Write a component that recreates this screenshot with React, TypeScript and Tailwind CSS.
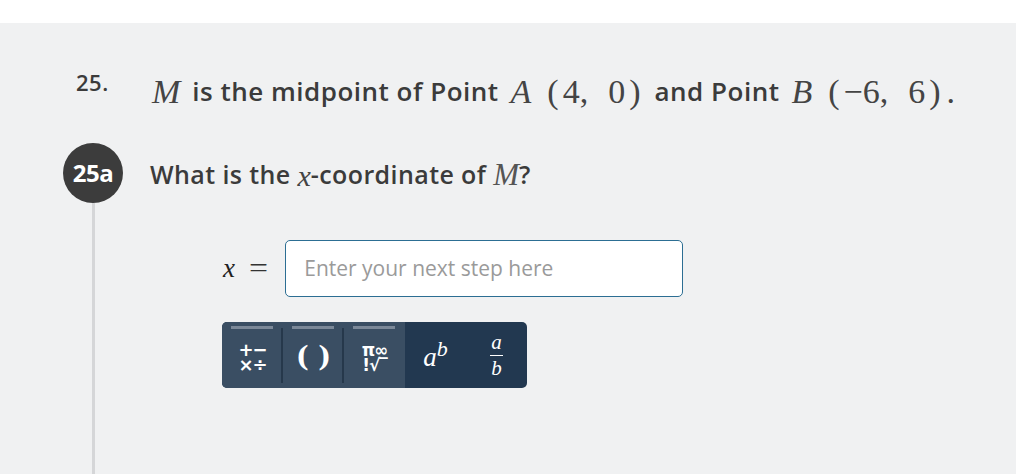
import React from 'react';

const serif = "font-['Liberation_Serif','DejaVu_Serif',serif]";
const sans = "font-['Open_Sans','Lato',sans-serif]";

const M: React.FC<{ children: React.ReactNode; className?: string }> = ({ children, className }) => (
    <span className={`${serif} font-normal tracking-normal ${className ?? ''}`}>{children}</span>
);

// a coordinate pair typeset like KaTeX: wide parens, spaced comma
const Coord: React.FC<{ x: string; y: string; dot?: boolean }> = ({ x, y, dot }) => (
    <span className={`${serif} font-normal tracking-normal text-[34px] text-[#444] inline-flex items-center`}>
        <span className="mr-[4px]">(</span>
        <span>{x},</span>
        <span className="ml-[20px]">{y}</span>
        <span className="ml-[4px]">)</span>
        {dot && <span className="ml-[6px]">.</span>}
    </span>
);

const KeyBar: React.FC = () => (
    <div className="absolute top-[4px] left-[9px] h-[3px] w-[42px] bg-[#7b8898]" />
);

const App: React.FC = () => {
    return (
        <div className={`w-full h-[474px] bg-white flex flex-col overflow-hidden ${sans}`}>
            <div className="h-[23px] bg-white" />
            <div className="flex-1 bg-[#f0f1f2] flex flex-col pt-[48px]">
                {/* problem statement */}
                <div className="flex items-start pl-[76px]">
                    <span className="w-[76px] text-[22px] leading-[22px] font-semibold text-[#3b3b3b] tracking-[0.5px]">25.</span>
                    <div className="h-[40px] flex items-center text-[26px] font-semibold text-[#3b3b3b] whitespace-nowrap tracking-[0.5px]">
                        <M className="italic text-[34px] text-[#444] mr-[12px]">M</M>
                        is the midpoint of Point
                        <M className="italic text-[34px] text-[#444] ml-[12px] mr-[16px]">A</M>
                        <Coord x="4" y="0" />
                        <span className="ml-[14px]">and Point</span>
                        <M className="italic text-[34px] text-[#444] ml-[12px] mr-[16px]">B</M>
                        <Coord x="−6" y="6" dot />
                    </div>
                </div>

                {/* part a */}
                <div className="flex flex-1 mt-[32px]">
                    <div className="w-[60px] ml-[63px] flex flex-col items-center">
                        <div className="w-[60px] h-[60px] rounded-full bg-[#3c3c3c] flex items-center justify-center text-white text-[24px] font-bold tracking-[-0.5px]">
                            25a
                        </div>
                        <div className="w-[3px] flex-1 bg-[#d5d6d8]" />
                    </div>
                    <div className="ml-[27px] flex flex-col">
                        <div className="h-[60px] flex items-center pt-[4px] text-[25px] font-semibold text-[#3b3b3b] whitespace-nowrap tracking-[0.4px]">
                            What is the&nbsp;<M className="italic text-[30px] text-[#444]">x</M>-coordinate of&nbsp;<M className="italic text-[31px] text-[#555]">M</M>?
                        </div>

                        <div className="flex items-center mt-[37px] ml-[73px]">
                            <M className="italic text-[27px] text-[#222]">x</M>
                            <M className="text-[27px] text-[#333] ml-[16px] scale-x-125">=</M>
                            <div className="ml-[19px] w-[398px] h-[57px] bg-white border border-[#2c6e93] rounded-[5px] flex items-center pl-[18px] text-[21px] text-[#9a9a9a]">
                                Enter your next step here
                            </div>
                        </div>

                        <div className="mt-[25px] ml-[72px] w-[305px] h-[66px] rounded-[5px] overflow-hidden flex bg-[#223850]">
                            <div className="relative w-[61px] bg-[#3a4e63] flex items-center justify-center">
                                <KeyBar />
                                <div className="flex flex-col items-center gap-[1px] text-white font-extrabold text-[18px] leading-[14px] mt-[4px] font-['DejaVu_Sans',sans-serif]">
                                    <span className="tracking-[-1px]">+−</span>
                                    <span className="tracking-[-1px]">×÷</span>
                                </div>
                                <div className="absolute right-0 top-[6px] bottom-[5px] w-[2px] bg-[#26384b]" />
                            </div>
                            <div className="relative w-[61px] bg-[#3a4e63] flex items-center justify-center">
                                <KeyBar />
                                <span className="text-white font-bold text-[27px] mt-[4px] font-['DejaVu_Serif',serif]">( )</span>
                                <div className="absolute right-0 top-[6px] bottom-[5px] w-[2px] bg-[#26384b]" />
                            </div>
                            <div className="relative w-[61px] bg-[#3a4e63] flex items-center justify-center">
                                <KeyBar />
                                <div className="flex flex-col items-center gap-[1px] text-white font-bold text-[17px] leading-[14px] mt-[4px] font-['DejaVu_Sans',sans-serif]">
                                    <span className="tracking-[-1px]">π∞</span>
                                    <span className="tracking-[-1px]">!√‾</span>
                                </div>
                            </div>
                            <div className="w-[61px] flex items-center justify-center">
                                <M className="italic text-white text-[27px] mt-[4px]">
                                    a<sup className="text-[22px] -top-[10px] relative">b</sup>
                                </M>
                            </div>
                            <div className="w-[61px] flex items-center justify-center">
                                <div className={`flex flex-col items-center italic text-white text-[21px] leading-[19px] ${serif}`}>
                                    <span>a</span>
                                    <span className="w-[13px] h-[1px] bg-white my-[3px]" />
                                    <span>b</span>
                                </div>
                            </div>
                        </div>
                    </div>
                </div>
            </div>
        </div>
    );
};

export default App;
